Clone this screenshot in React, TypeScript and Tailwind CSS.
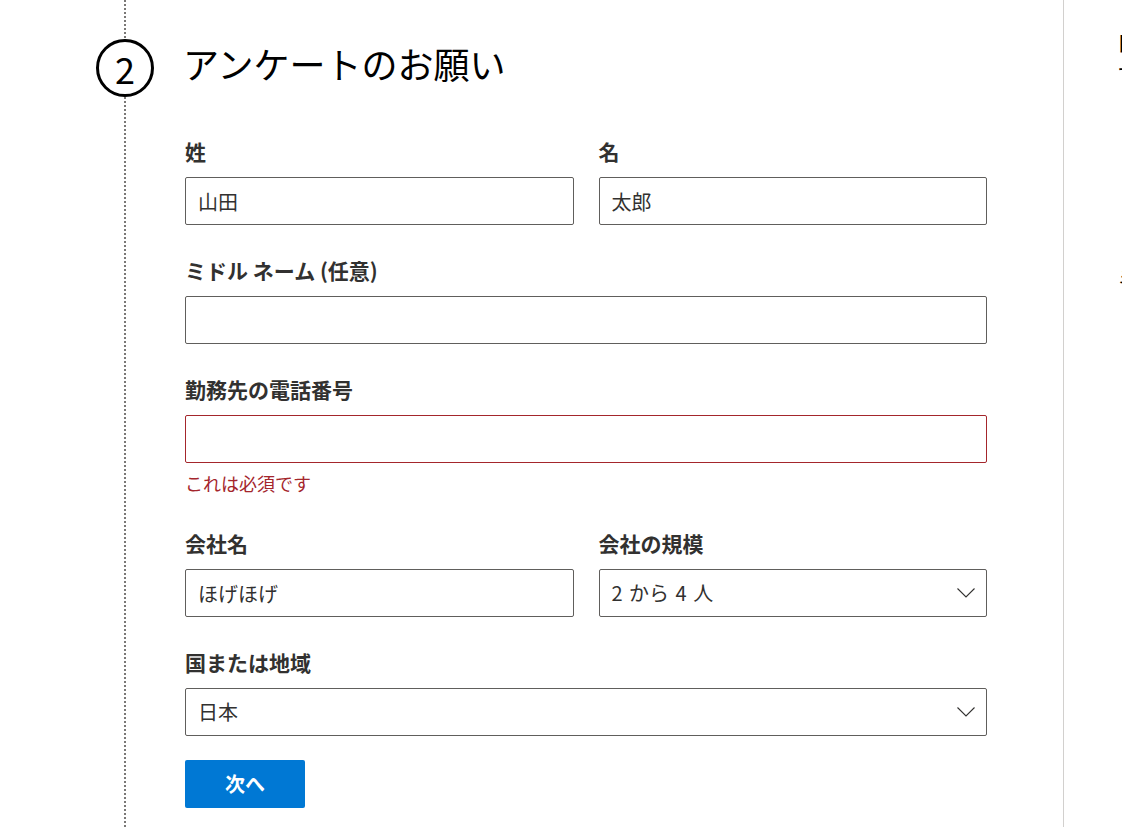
import React from "react";

const font = { fontFamily: '"Noto Sans CJK JP", "Noto Sans", sans-serif' };

const Label: React.FC<{ text: string }> = ({ text }) => (
  <div className="h-[26px] mb-[11px] text-[21px] leading-[22px] font-bold text-[#323130]">
    {text}
  </div>
);

const TextField: React.FC<{ label: string; value?: string; error?: boolean }> = ({
  label,
  value = "",
  error,
}) => (
  <div>
    <Label text={label} />
    <input
      type="text"
      readOnly
      value={value}
      className={`block w-full h-[48px] px-[12px] rounded-[2px] border bg-white text-[20px] text-[#323130] outline-none ${
        error ? "border-[#a4262c]" : "border-[#605e5c]"
      }`}
      style={font}
    />
  </div>
);

const SelectField: React.FC<{ label: string; value: string }> = ({ label, value }) => (
  <div>
    <Label text={label} />
    <div className="flex items-center justify-between h-[48px] pl-[12px] pr-[11px] rounded-[2px] border border-[#605e5c] bg-white text-[20px] text-[#323130]">
      <span className="[word-spacing:2px]">{value}</span>
      <svg width="18" height="10" viewBox="0 0 18 10" fill="none">
        <path d="M0.5 0.5 L9 9 L17.5 0.5" stroke="#323130" strokeWidth="1.1" />
      </svg>
    </div>
  </div>
);

const Dots: React.FC<{ className?: string }> = ({ className = "" }) => (
  <div
    className={`w-[2px] bg-[repeating-linear-gradient(to_bottom,#7a7876_0px,#7a7876_2px,transparent_2px,transparent_4px)] ${className}`}
  />
);

export default function App() {
  return (
    <div className="flex w-[1122px] h-[827px] overflow-hidden bg-white" style={font}>
      <main className="flex w-[1064px] shrink-0 border-r border-[#d2d0ce]">
        <div className="ml-[96px] w-[58px] flex flex-col items-center shrink-0">
          <Dots className="h-[39px]" />
          <div className="w-[58px] h-[58px] shrink-0 rounded-full border-[3px] border-black flex items-center justify-center text-[36px] leading-none text-black">
            2
          </div>
          <Dots className="flex-1" />
        </div>

        <div className="ml-[31px] w-[802px]">
          <h2 className="mt-[41px] -ml-[2px] text-[36px] leading-[44px] font-normal text-black">
            アンケートのお願い
          </h2>

          <div className="mt-[55px] flex flex-col">
            <div className="grid grid-cols-2 gap-x-[25px]">
              <TextField label="姓" value="山田" />
              <TextField label="名" value="太郎" />
            </div>

            <div className="mt-[34px]">
              <TextField label="ミドル ネーム (任意)" />
            </div>

            <div className="mt-[34px]">
              <TextField label="勤務先の電話番号" error />
              <div className="mt-[8px] text-[18px] leading-[24px] text-[#a4262c]">
                これは必須です
              </div>
            </div>

            <div className="mt-[37px] grid grid-cols-2 gap-x-[25px]">
              <TextField label="会社名" value="ほげほげ" />
              <SelectField label="会社の規模" value="2 から 4 人" />
            </div>

            <div className="mt-[34px]">
              <SelectField label="国または地域" value="日本" />
            </div>

            <div className="mt-[24px]">
              <button className="w-[120px] h-[48px] rounded-[2px] bg-[#0078d4] text-white text-[20px] font-bold">
                次へ
              </button>
            </div>
          </div>
        </div>
      </main>

      <aside className="flex-1 pl-[53px] whitespace-nowrap text-black">
        <div className="mt-[26px] text-[24px] leading-[32px]">ロ</div>
        <div className="text-[24px] leading-[32px]">すべて</div>
        <div className="mt-[174px] text-[20px] leading-[28px]">ミ</div>
        <div className="mt-[170px] text-[18px] leading-[24px]">・</div>
      </aside>
    </div>
  );
}
